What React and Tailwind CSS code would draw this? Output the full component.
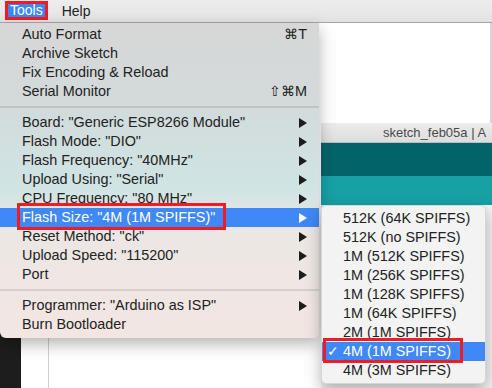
// Arduino IDE "Tools" menu with the Flash Size submenu open
const mainGroups = [
  [
    { label: 'Auto Format', shortcut: '⌘T' },
    { label: 'Archive Sketch' },
    { label: 'Fix Encoding & Reload' },
    { label: 'Serial Monitor', shortcut: '⇧⌘M' },
  ],
  [
    { label: 'Board: "Generic ESP8266 Module"', sub: true },
    { label: 'Flash Mode: "DIO"', sub: true },
    { label: 'Flash Frequency: "40MHz"', sub: true },
    { label: 'Upload Using: "Serial"', sub: true },
    { label: 'CPU Frequency: "80 MHz"', sub: true },
    { label: 'Flash Size: "4M (1M SPIFFS)"', sub: true, active: true },
    { label: 'Reset Method: "ck"', sub: true },
    { label: 'Upload Speed: "115200"', sub: true },
    { label: 'Port', sub: true },
  ],
  [
    { label: 'Programmer: "Arduino as ISP"', sub: true },
    { label: 'Burn Bootloader' },
  ],
]

const sizes = [
  '512K (64K SPIFFS)',
  '512K (no SPIFFS)',
  '1M (512K SPIFFS)',
  '1M (256K SPIFFS)',
  '1M (128K SPIFFS)',
  '1M (64K SPIFFS)',
  '2M (1M SPIFFS)',
  '4M (1M SPIFFS)',
  '4M (3M SPIFFS)',
]

function Arrow({ white }) {
  return (
    <svg width="8" height="10" viewBox="0 0 8 10">
      <polygon points="0,0 8,5 0,10" fill={white ? '#ffffff' : '#1c1c1c'} />
    </svg>
  )
}

function MenuRow({ item }) {
  return (
    <div
      className={`flex h-[19px] items-center justify-between pl-[22px] pr-[12px] leading-[19px] ${
        item.active ? 'bg-[#3f88f5] text-white' : 'text-[#222]'
      }`}
    >
      <span className="whitespace-nowrap">{item.label}</span>
      {item.shortcut && <span className="text-[#222]">{item.shortcut}</span>}
      {item.sub && <Arrow white={item.active} />}
    </div>
  )
}

function Separator() {
  return (
    <div className="flex h-[12px] items-center">
      <div className="h-[2px] w-full bg-black/10" />
    </div>
  )
}

export default function App() {
  return (
    <div className="relative h-[388px] w-[492px] overflow-hidden bg-white font-['Liberation_Sans',Arial,sans-serif] text-[14.4px]">
      {/* menu bar */}
      <div className="flex h-[23px] items-start border-b border-[#a8a8a8] bg-[linear-gradient(180deg,#ededed,#e3e3e3)] text-[14px]">
        <span className="ml-[5px] mt-[1px] h-[19px] border-[3px] border-[#ee1c24] bg-[#3d87f3] px-[2px] leading-[13px] text-white">
          Tools
        </span>
        <span className="ml-[14px] leading-[22px] text-[#222]">Help</span>
      </div>

      {/* window behind the menus */}
      <div className="flex h-[365px]">
        <div className="w-[21px] bg-[#1d1d1d]" />
        <div className="flex-1 bg-white">
          <div className="ml-[27px] h-full border-l border-[#cfcfcf]" />
        </div>
        <div className="flex w-[171px] flex-col">
          <div className="h-[100px] border-r-[2px] border-[#d4d4d4] bg-white" />
          <div className="h-[20px] overflow-hidden whitespace-nowrap border-b border-[#bdbdbd] bg-[linear-gradient(180deg,#ececec,#dddddd)] pl-[62px] text-[13px] leading-[20px] text-[#4a4a4a]">
            sketch_feb05a | A
          </div>
          <div className="h-[33px] bg-[#006468]" />
          <div className="h-[29px] bg-[#17a1a5]" />
          <div className="flex-1 bg-[#f4f4f4]" />
        </div>
      </div>

      {/* Tools menu */}
      <div className="absolute left-0 top-[23px] w-[319px] rounded-b-[6px] bg-[linear-gradient(180deg,#d7d7d7_0%,#d3dada_25%,#cfe4e4_52%,#ebe7e4_66%,#f3e6e2_100%)] pb-[4px] pt-[2px] shadow-[0_6px_16px_rgba(0,0,0,0.3)]">
        {mainGroups.map((group, gi) => (
          <div key={gi}>
            {gi > 0 && <Separator />}
            {group.map((item) => (
              <MenuRow key={item.label} item={item} />
            ))}
          </div>
        ))}
        <div className="absolute left-[17px] top-[180px] h-[27px] w-[209px] border-[3px] border-[#ee1c24]" />
      </div>

      {/* Flash Size submenu */}
      <div className="absolute left-[321px] top-[205px] w-[165px] rounded-[5px] border border-[#d6d6d6] bg-[#f3f3f3] pb-[3px] pt-[3px] shadow-[0_6px_16px_rgba(0,0,0,0.3)]">
        {sizes.map((s, i) => {
          const checked = i === 7
          return (
            <div
              key={s}
              className={`relative h-[19px] pl-[21px] leading-[19px] ${
                checked ? 'bg-[#3f88f5] text-white' : 'text-[#222]'
              }`}
            >
              {checked && <span className="absolute left-[5px] top-0">✓</span>}
              {s}
            </div>
          )
        })}
        <div className="absolute left-[1px] top-[132px] h-[25px] w-[140px] border-[3px] border-[#ee1c24]" />
      </div>
    </div>
  )
}
